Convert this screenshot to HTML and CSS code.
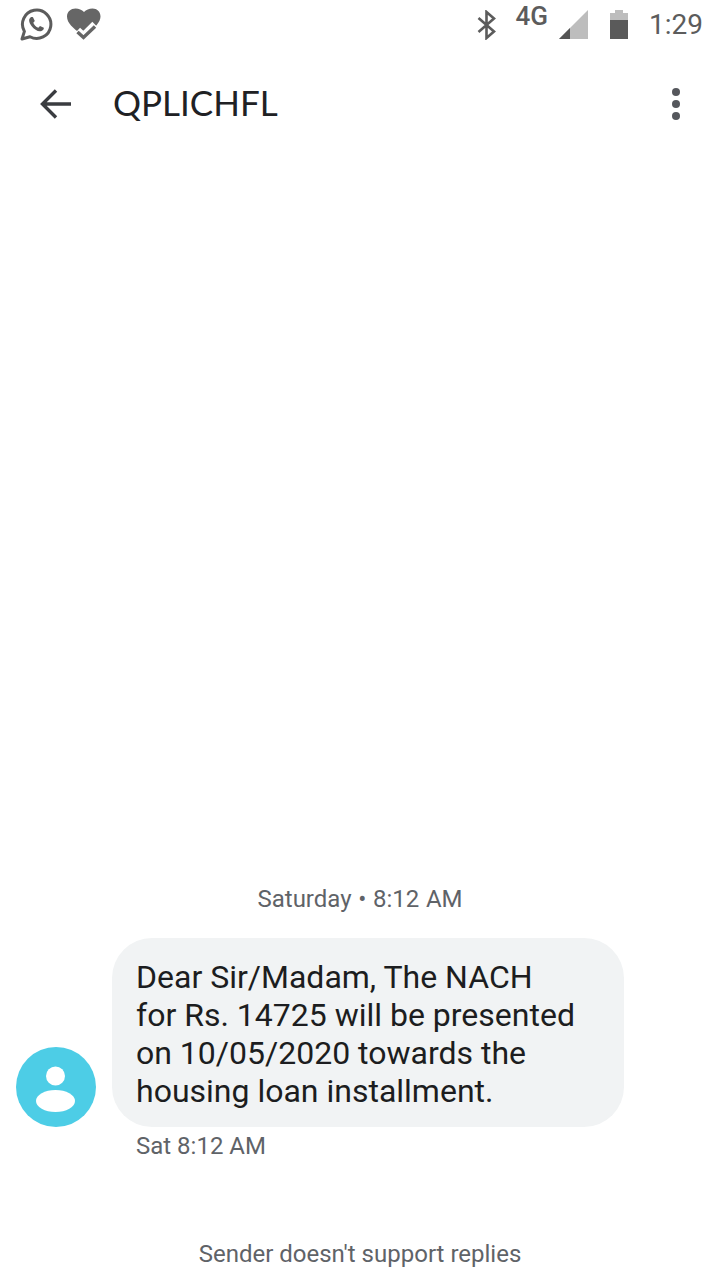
FILE: index.html
```html
<!DOCTYPE html>
<html lang="en">
<head>
  <meta charset="UTF-8">
  <title>QPLICHFL</title>
  <link rel="stylesheet" href="styles.css">
</head>
<body>

  <div class="status-bar">
    <div class="status-left">
      <!-- whatsapp -->
      <svg class="icon-whatsapp" width="34" height="34" viewBox="0 0 34 34">
        <path d="M3 31 L5.400 23.400 A14.200 14.200 0 1 1 11 28.800 Z" fill="none" stroke="#5c5c5c" stroke-width="3" stroke-linejoin="round"/>
        <path d="M11.500 9.500 C9.500 11 9.600 14 12.500 18 C15.500 22 19.500 24 22.500 23 C24.500 22.300 25 20.800 24.800 19.800 L21 18 L19.300 19.800 C17 19 15 16.600 14.300 14.800 L15.800 13 L14 9.300 C13.300 9 12.300 9 11.500 9.500 Z" fill="#5c5c5c"/>
      </svg>
      <!-- heart with check -->
      <svg class="icon-heart" width="36" height="32" viewBox="0 0 36 32">
        <path d="M17 28 L14 26 C6 20 0 15 0 8.500 C0 3.500 4 0.500 8.500 0.500 C12 0.500 14.800 2 17 4 C19.200 2 22 0.500 25.500 0.500 C30 0.500 33.500 3.500 33.500 8.500 C33.500 14 28 20 20 26 Z" fill="#666"/>
        <path d="M10 23 L16.500 29 L28.500 17" fill="none" stroke="#fff" stroke-width="9"/>
        <path d="M10.500 24 L16.500 29.500 L28 18.500" fill="none" stroke="#666" stroke-width="3.400"/>
      </svg>
    </div>
    <div class="status-right">
      <svg class="icon-bt" width="22" height="30" viewBox="0 0 22 30">
        <path d="M2.500 8 L18 21.500 L10.500 28 L10.500 2 L18 8.500 L2.500 22" fill="none" stroke="#5c5c5c" stroke-width="2.600"/>
      </svg>
      <span class="network">4G</span>
      <svg class="icon-signal" width="30" height="30" viewBox="0 0 30 30">
        <path d="M0 29 L29 0 L29 29 Z" fill="#bdbdbd"/>
        <path d="M0 29 L11 18 L11 29 Z" fill="#555"/>
      </svg>
      <svg class="icon-battery" width="20" height="30" viewBox="0 0 20 30">
        <path d="M6 0 H14 V3 H19 V10 H1 V3 H6 Z" fill="#bdbdbd"/>
        <rect x="1" y="10" width="18" height="19" fill="#5a5a5a"/>
      </svg>
      <span class="clock">1:29</span>
    </div>
  </div>

  <div class="toolbar">
    <svg class="back" width="36" height="34" viewBox="0 0 36 34">
      <path d="M34 17 H6 M19 3.500 L5.500 17 L19 30.500" fill="none" stroke="#3a3c40" stroke-width="3.400"/>
    </svg>
    <div class="title">QPLICHFL</div>
    <div class="menu">
      <span class="dot"></span>
      <span class="dot"></span>
      <span class="dot"></span>
    </div>
  </div>

  <main class="thread">
    <div class="date">Saturday • 8:12 AM</div>
    <div class="message">
      <div class="avatar">
        <svg width="80" height="80" viewBox="0 0 80 80">
          <circle cx="39.500" cy="29" r="9.500" fill="#fff"/>
          <ellipse cx="39.500" cy="54" rx="19.500" ry="11" fill="#fff"/>
        </svg>
      </div>
      <div class="bubble">Dear Sir/Madam, The NACH<br>for Rs. 14725 will be presented<br>on 10/05/2020 towards the<br>housing loan installment.</div>
    </div>
    <div class="sent-time">Sat 8:12 AM</div>
  </main>

  <footer class="no-reply">Sender doesn't support replies</footer>

</body>
</html>
```

FILE: styles.css
```css
html, body {
  margin: 0;
  padding: 0;
}
body {
  width: 720px;
  height: 1280px;
  overflow: hidden;
  display: flex;
  flex-direction: column;
  background: #fff;
  font-family: Roboto, sans-serif;
}
.status-bar {
  height: 48px;
  display: flex;
  justify-content: space-between;
  align-items: flex-start;
  padding: 8px 17px 0 19px;
  box-sizing: border-box;
  color: #5c5c5c;
}
.status-left, .status-right {
  display: flex;
  align-items: flex-start;
}
.icon-heart {
  margin-left: 14px;
}
.icon-bt {
  margin-top: 2px;
  margin-right: 10px;
}
.network {
  margin-left: 8px;
  margin-top: -2px;
  font-size: 26px;
  font-weight: 500;
  line-height: 20px;
}
.icon-signal {
  margin-left: 11px;
  margin-top: 2px;
}
.icon-battery {
  margin-left: 20px;
  margin-top: 2px;
}
.clock {
  margin-left: 20px;
  font-size: 28px;
  line-height: 34px;
}
.toolbar {
  height: 112px;
  display: flex;
  align-items: center;
  padding: 0 40px 0 37px;
  box-sizing: border-box;
}
.title {
  margin-left: 40px;
  flex: 1;
  font-family: Lato, sans-serif;
  font-size: 35px;
  line-height: 40px;
  margin-top: -4px;
  color: #202124;
}
.menu {
  display: flex;
  flex-direction: column;
  gap: 4px;
}
.dot {
  width: 8px;
  height: 8px;
  border-radius: 50%;
  background: #55575c;
}
.thread {
  flex: 1;
  display: flex;
  flex-direction: column;
  justify-content: flex-end;
}
.date {
  text-align: center;
  font-size: 24px;
  line-height: 30px;
  word-spacing: 0.7px;
  color: #5f6368;
  margin-bottom: 24px;
}
.message {
  display: flex;
  align-items: flex-end;
  padding-left: 16px;
}
.avatar {
  width: 80px;
  height: 80px;
  border-radius: 50%;
  background: #4dcde6;
  flex: none;
}
.avatar svg {
  display: block;
}
.bubble {
  margin-left: 16px;
  width: 512px;
  height: 189px;
  box-sizing: border-box;
  padding: 20px 24px;
  border-radius: 40px;
  background: #f1f3f4;
  font-size: 32px;
  line-height: 38px;
  color: #1c1d20;
}
.sent-time {
  margin: 4px 0 0 136px;
  font-size: 24px;
  line-height: 30px;
  color: #5f6368;
}
.no-reply {
  height: 119px;
  box-sizing: border-box;
  padding-top: 78px;
  text-align: center;
  font-size: 24px;
  line-height: 30px;
  color: #5f6368;
}
```
